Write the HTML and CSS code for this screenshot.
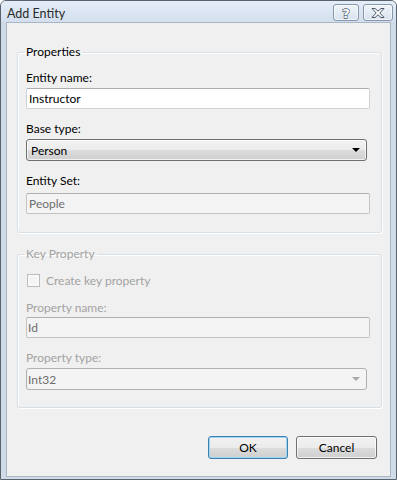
FILE: index.html
```html
<!DOCTYPE html>
<html lang="en">
<head>
    <meta charset="UTF-8">
    <title>Add Entity</title>
    <link rel="stylesheet" href="styles.css">
</head>
<body>
    <div class="window">
        <div class="titlebar">
            <span class="title">Add Entity</span>
            <div class="caption-buttons">
                <span class="cap-btn help">
                    <svg width="12" height="14" viewBox="0 0 12 14"><text x="6" y="12" text-anchor="middle">?</text></svg>
                </span>
                <span class="cap-btn close">
                    <svg width="14" height="10" viewBox="0 0 14 10"><polygon points="1,0.5 4,0.5 7,3.2 10,0.5 13,0.5 8.8,5 13,9.5 10,9.5 7,6.8 4,9.5 1,9.5 5.2,5"/></svg>
                </span>
            </div>
        </div>

        <div class="client">
            <fieldset class="group">
                <legend>Properties</legend>
                <label class="field-label">Entity name:</label>
                <input class="textbox gap-s" type="text" value="Instructor">

                <label class="field-label">Base type:</label>
                <div class="combo gap-s">
                    <span>Person</span>
                    <span class="arrow"></span>
                </div>

                <label class="field-label">Entity Set:</label>
                <input class="textbox readonly gap-m" type="text" value="People" disabled>
            </fieldset>

            <fieldset class="group key-group">
                <legend class="disabled-text">Key Property</legend>
                <div class="check-row">
                    <span class="checkbox"></span>
                    <span class="disabled-text">Create key property</span>
                </div>

                <label class="field-label disabled-text">Property name:</label>
                <input class="textbox readonly tight gap-xs" type="text" value="Id" disabled>

                <label class="field-label disabled-text">Property type:</label>
                <div class="combo disabled gap-s">
                    <span>Int32</span>
                    <span class="arrow"></span>
                </div>
            </fieldset>

            <div class="actions">
                <button class="btn default">OK</button>
                <button class="btn cancel">Cancel</button>
            </div>
        </div>
    </div>
</body>
</html>
```

FILE: styles.css
```css
body {
    margin: 0;
    font-family: Lato, "Open Sans", sans-serif;
    font-size: 12px;
    color: #000;
    background: #fff;
}

.window {
    width: 397px;
    height: 480px;
    box-sizing: border-box;
    border: 1px solid #59626d;
    border-radius: 6px 6px 0 0;
    background: #cfdbe8;
    display: flex;
    flex-direction: column;
}

.titlebar {
    height: 21px;
    display: flex;
    align-items: flex-start;
    justify-content: space-between;
    padding: 0 3px 0 6px;
    background: linear-gradient(#e4edf8, #d3dfee);
    border-radius: 5px 5px 0 0;
}
.title {
    line-height: 25px;
    font-size: 12.5px;
    color: #2a2a2a;
}
.caption-buttons {
    display: flex;
    gap: 4px;
    margin-top: 3px;
}
.cap-btn {
    height: 15px;
    width: 24px;
    border: 1px solid #8796a8;
    border-radius: 3px;
    background: linear-gradient(#f0f5fa, #d8e2ee);
    box-shadow: inset 0 0 0 1px rgba(255, 255, 255, 0.6);
    display: flex;
    align-items: center;
    justify-content: center;
}
.cap-btn.close {
    width: 28px;
}
.cap-btn text {
    font-family: "DejaVu Sans", sans-serif;
    font-weight: bold;
    font-size: 13px;
    fill: #fff;
    stroke: #4a5868;
    stroke-width: 1.3px;
    paint-order: stroke;
}
.cap-btn polygon {
    fill: #fff;
    stroke: #4a5868;
    stroke-width: 1;
}

.client {
    flex: 1;
    margin: 0 5px 2px;
    border: 1px solid #a9b6c4;
    background: #f0f0f0;
    display: flex;
    flex-direction: column;
}

.group {
    margin: 21px 8px 0 10px;
    padding: 10px 11px 18px 8px;
    border: 1px solid #d5dfe5;
    border-radius: 3px;
    box-shadow: inset 1px 1px 0 #fff, 1px 1px 0 #fff;
    display: flex;
    flex-direction: column;
    min-width: 0;
}
.group legend {
    line-height: 16px;
    padding: 0 2px;
    margin-left: -2px;
}
.key-group {
    margin-top: 13px;
    padding-bottom: 17px;
}

.field-label {
    display: block;
    line-height: 16px;
    margin-top: 12px;
}
.group legend + .field-label {
    margin-top: 0;
}
.disabled-text {
    color: #a3a3a3;
}

.gap-xs { margin-top: 1px; }
.gap-s { margin-top: 2px; }
.gap-m { margin-top: 4px; }

.textbox {
    display: block;
    box-sizing: border-box;
    width: 100%;
    height: 21px;
    margin-left: 0;
    margin-right: 0;
    padding: 0 2px;
    font: inherit;
    color: #000;
    background: #fff;
    border: 1px solid #cdd1d8;
    border-top-color: #abadb3;
    border-radius: 2px;
    outline: none;
}
.textbox.readonly {
    background: #f4f4f4;
    color: #6d6d6d;
    border-color: #c4c4c4;
    border-top-color: #b0b0b0;
}
.textbox.tight {
    padding-left: 1px;
}

.combo {
    box-sizing: border-box;
    height: 22px;
    margin-right: 3px;
    padding: 0 6px 0 4px;
    display: flex;
    align-items: center;
    justify-content: space-between;
    border: 1px solid #707070;
    border-radius: 3px;
    background: linear-gradient(#f2f2f2 0%, #ebebeb 50%, #dddddd 50%, #cfcfcf 100%);
    box-shadow: inset 0 0 0 1px rgba(255, 255, 255, 0.7);
}
.combo .arrow {
    width: 0;
    height: 0;
    border-left: 4px solid transparent;
    border-right: 4px solid transparent;
    border-top: 4px solid #000;
}
.combo.disabled {
    padding-left: 1px;
    color: #6d6d6d;
    background: #f4f4f4;
    border-color: #adb2b5;
    box-shadow: none;
}
.combo.disabled .arrow {
    border-top-color: #a8a8a8;
}

.check-row {
    height: 16px;
    display: flex;
    align-items: center;
    gap: 6px;
    margin-left: 1px;
}
.checkbox {
    box-sizing: border-box;
    width: 13px;
    height: 13px;
    border: 1px solid #bcbcbc;
    background: #f4f4f4;
    box-shadow: inset 0 0 0 2px #f8f8f8;
}

.actions {
    display: flex;
    justify-content: flex-end;
    gap: 8px;
    margin: 28px 13px 0 0;
}
.btn {
    box-sizing: border-box;
    width: 80px;
    height: 23px;
    padding: 0;
    font: inherit;
    color: #000;
    border: 1px solid #707070;
    border-radius: 3px;
    background: linear-gradient(#f2f2f2 0%, #ebebeb 50%, #dddddd 50%, #cfcfcf 100%);
    box-shadow: inset 0 0 0 1px rgba(255, 255, 255, 0.7);
}
.btn.cancel {
    width: 81px;
}
.btn.default {
    border-color: #3c7fb1;
    box-shadow: inset 0 0 0 1px #9fd7f3;
}
```
